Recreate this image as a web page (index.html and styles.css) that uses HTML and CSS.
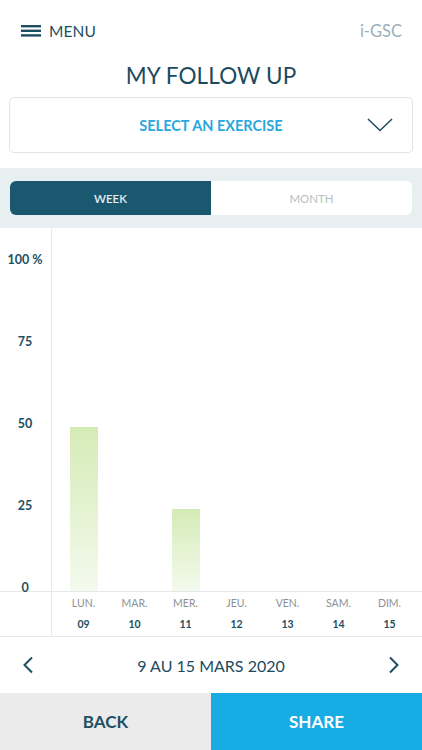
FILE: index.html
```html
<!DOCTYPE html>
<html>
<head>
<meta charset="utf-8">
<link rel="stylesheet" href="styles.css">
</head>
<body>
<div class="app">
  <header class="topbar">
    <div class="menu">
      <svg class="burger" width="20" height="12" viewBox="0 0 20 12"><rect x="0" y="0" width="20" height="2.4" fill="#1d4f63"/><rect x="0" y="4.6" width="20" height="2.4" fill="#1d4f63"/><rect x="0" y="9.2" width="20" height="2.4" fill="#1d4f63"/></svg>
      <span>MENU</span>
    </div>
    <div class="brand">i-GSC</div>
  </header>

  <h1 class="title">MY FOLLOW UP</h1>

  <div class="select">
    <span class="select-text">SELECT AN EXERCISE</span>
    <svg class="select-chev" width="26" height="14" viewBox="0 0 26 14"><polyline points="1,1 13,12.5 25,1" fill="none" stroke="#1d4f63" stroke-width="1.6"/></svg>
  </div>

  <div class="band">
    <div class="segmented">
      <div class="seg active">WEEK</div>
      <div class="seg">MONTH</div>
    </div>
  </div>

  <div class="chart">
    <div class="plot">
      <div class="yaxis">
        <span>100 %</span>
        <span>75</span>
        <span>50</span>
        <span>25</span>
        <span>0</span>
      </div>
      <div class="bars">
        <div class="col"><div class="bar" style="height:164px"></div></div>
        <div class="col"></div>
        <div class="col"><div class="bar" style="height:82px"></div></div>
        <div class="col"></div>
        <div class="col"></div>
        <div class="col"></div>
        <div class="col"></div>
      </div>
    </div>
    <div class="labels">
      <div class="ygap"></div>
      <div class="days">
        <div class="day"><span class="dname">LUN.</span><span class="dnum">09</span></div>
        <div class="day"><span class="dname">MAR.</span><span class="dnum">10</span></div>
        <div class="day"><span class="dname">MER.</span><span class="dnum">11</span></div>
        <div class="day"><span class="dname">JEU.</span><span class="dnum">12</span></div>
        <div class="day"><span class="dname">VEN.</span><span class="dnum">13</span></div>
        <div class="day"><span class="dname">SAM.</span><span class="dnum">14</span></div>
        <div class="day"><span class="dname">DIM.</span><span class="dnum">15</span></div>
      </div>
    </div>
  </div>

  <div class="datenav">
    <svg width="12" height="18" viewBox="0 0 12 18"><polyline points="10,1.5 2.5,9 10,16.5" fill="none" stroke="#1d4f63" stroke-width="2"/></svg>
    <span class="daterange">9 AU 15 MARS 2020</span>
    <svg width="12" height="18" viewBox="0 0 12 18"><polyline points="2,1.5 9.5,9 2,16.5" fill="none" stroke="#1d4f63" stroke-width="2"/></svg>
  </div>

  <div class="actions">
    <div class="btn back">BACK</div>
    <div class="btn share">SHARE</div>
  </div>
</div>
</body>
</html>
```

FILE: styles.css
```css
* { box-sizing: border-box; margin: 0; padding: 0; }
html, body { width: 422px; height: 750px; overflow: hidden; background: #fff; }
body { font-family: Lato, "Open Sans", sans-serif; color: #1d4f63; }
.app { width: 422px; height: 750px; display: flex; flex-direction: column; }

.topbar { height: 60px; display: flex; align-items: center; justify-content: space-between; padding: 2px 20px 0 21px; }
.menu { display: flex; align-items: center; gap: 8px; font-size: 15.5px; letter-spacing: 0.1px; }
.burger { display: block; }
.brand { font-size: 16.5px; color: #9ab0b8; }

.title { font-weight: 400; font-size: 22.5px; text-align: center; height: 37px; line-height: 32px; color: #1c4a5f; letter-spacing: 0.1px; }

.select { margin: 0 9px; height: 56px; border: 1px solid #e2e4e5; border-radius: 5px; display: flex; align-items: center; justify-content: center; position: relative; }
.select-text { color: #2aa7dc; font-weight: 700; font-size: 14.5px; }
.select-chev { position: absolute; right: 19px; top: 20px; }

.band { margin-top: 15px; height: 60px; background: #e7eff1; padding: 13px 10px 13px 10px; }
.segmented { display: flex; height: 34px; border-radius: 6px; overflow: hidden; background: #fff; }
.seg { flex: 1; display: flex; align-items: center; justify-content: center; font-size: 11.5px; color: #b8bfc2; padding-top: 1px; }
.seg.active { background: #1a5870; color: #e3edf0; font-weight: 600; }

.chart { display: flex; flex-direction: column; height: 409px; }
.plot { display: flex; height: 364px; border-bottom: 1px solid #e6e8e9; }
.yaxis { width: 52px; border-right: 1px solid #e6e8e9; display: flex; flex-direction: column; gap: 68px; padding-top: 25px; font-weight: 700; font-size: 12.5px; }
.yaxis span { display: block; height: 14px; line-height: 14px; text-align: center; padding-right: 1px; }
.bars { flex: 1; display: flex; align-items: flex-end; padding-left: 6px; padding-right: 7px; }
.col { width: 51px; display: flex; justify-content: center; align-items: flex-end; }
.bar { width: 28px; background: linear-gradient(to bottom, #d5ebb6, #f4faee); }

.labels { display: flex; height: 45px; border-bottom: 1px solid #e6e8e9; }
.ygap { width: 52px; border-right: 1px solid #e6e8e9; }
.days { flex: 1; display: flex; padding-left: 6px; padding-right: 7px; }
.day { width: 51px; display: flex; flex-direction: column; align-items: center; padding-top: 5px; }
.dname { font-size: 10.5px; color: #8b9194; height: 13px; line-height: 13px; }
.dnum { font-size: 10.5px; font-weight: 700; margin-top: 8px; height: 13px; line-height: 13px; }

.datenav { height: 56px; display: flex; align-items: center; justify-content: space-between; padding: 0 22px 0 22px; }
.datenav svg { display: block; }
.daterange { font-size: 16px; color: #1c4a5f; }

.actions { display: flex; height: 57px; }
.btn { flex: 1; display: flex; align-items: center; justify-content: center; font-weight: 700; font-size: 17px; }
.btn.back { background: #ebebeb; color: #1d4f63; }
.btn.share { background: #17ace4; color: #fff; }
```
